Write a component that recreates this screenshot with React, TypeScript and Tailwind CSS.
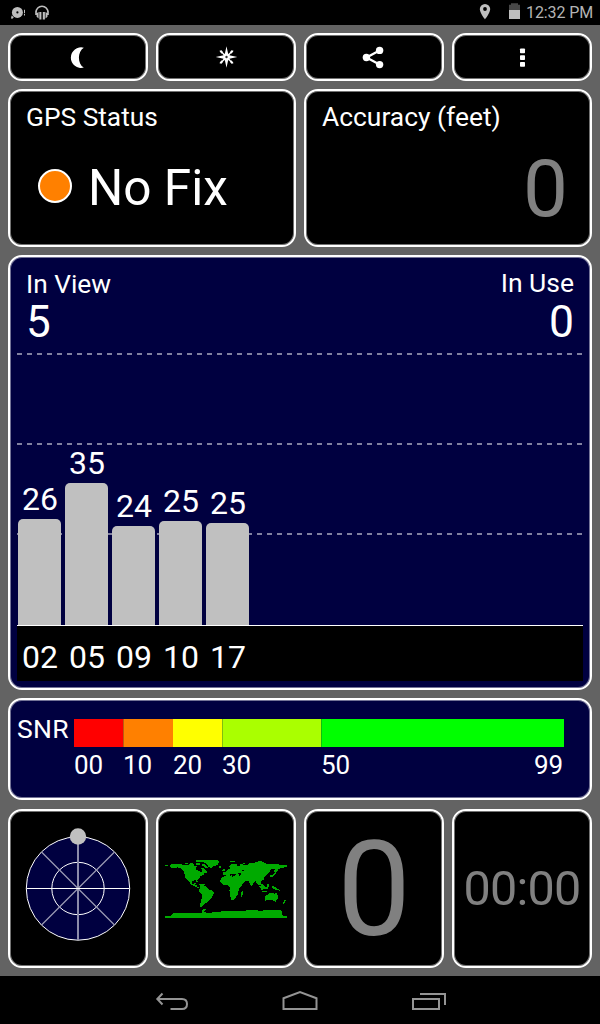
import type { ReactNode } from "react";

const bars = [
  { id: "02", snr: 26, height: 106 },
  { id: "05", snr: 35, height: 142 },
  { id: "09", snr: 24, height: 99 },
  { id: "10", snr: 25, height: 104 },
  { id: "17", snr: 25, height: 102 },
];

function Panel({ className = "", children }: { className?: string; children?: ReactNode }) {
  return (
    <div className={`rounded-[14px] border-2 border-white overflow-hidden shadow-[inset_0_0_0_1px_rgba(255,255,255,0.45)] ${className}`}>{children}</div>
  );
}

function StatusBar() {
  return (
    <header className="flex h-[25px] items-center bg-black text-[#b4b4b4]">
      <svg className="ml-[10px]" width="40" height="25" viewBox="10 0 40 25" fill="#bebebe">
        <circle cx="17.4" cy="12.4" r="5.5" />
        <circle cx="17.4" cy="12.4" r="1.1" fill="#000" />
        <path d="M11 18.4l.6-2.8 2.2 1.6-1.4 1.5z" />
        <path d="M24 9.8h1v3.4h-1zM24 14h1v1.6h-1z" />
        <path d="M36 12.3a6 6.1 0 0 1 12 0" fill="none" stroke="#bebebe" strokeWidth="1.6" />
        <path d="M35.200 11.500h1.600v3.500h-1.600zM47.200 11.500h1.600v3.500h-1.600zM36.600 13.200 38.600 12v6.500l-2-1.800zM39.300 12h2.100v7.600h-2.100zM42.800 12h2.100v7.600h-2.100zM45.500 12l2 1.200v3.500l-2 1.800z" />
      </svg>
      <div className="flex-1" />
      <svg width="50" height="25" viewBox="476 0 50 25" fill="#bebebe">
        <path fillRule="evenodd" d="M485 3.9a5.2 5.2 0 0 0-5.200 5.200c0 3.900 5.200 10.400 5.200 10.400s5.200-6.500 5.200-10.400A5.200 5.200 0 0 0 485 3.900zm0 3.200a1.900 1.900 0 1 1 0 3.800 1.900 1.900 0 0 1 0-3.800z" />
        <path fill="#484848" d="M511 3.300h7v1.400h2V10h-11V4.700h2z" />
        <path d="M509 10h11v9h-11z" />
      </svg>
      <span className="mr-[7px] w-[67px] whitespace-nowrap text-right text-[16px] leading-[25px] tracking-[-0.1px]">12:32 PM</span>
    </header>
  );
}

function MoonIcon() {
  return (
    <svg width="24" height="24" viewBox="66 45 24 24" fill="#fff">
      <path d="M83.800 47.700A10.300 10.300 0 1 0 83.800 67.600C77.300 64 77.300 51.500 83.800 47.700z" />
    </svg>
  );
}

function CompassIcon() {
  return (
    <svg width="24" height="24" viewBox="-12.500 -12 24 24" fill="#fff">
      <path d="M0-10.800 1.700-2.900 7.300-7.300 2.900-1.700 10.800 0 2.900 1.700 7.300 7.300 1.700 2.900 0 10.800-1.700 2.900-7.300 7.300-2.900 1.700-10.800 0-2.900-1.700-7.300-7.300-1.700-2.900z" />
      <path d="m5.400-6.900 1.500 1.500-2.100 2.200-1.600-1.600zM-5.400-6.900l-1.500 1.500 2.100 2.200 1.600-1.600zM5.400 6.900l1.500-1.500-2.100-2.200-1.600 1.600zM-5.400 6.900l-1.500-1.500 2.100-2.200 1.600 1.600z" />
      <circle r="1.200" fill="#333" />
    </svg>
  );
}

function ShareIcon() {
  return (
    <svg width="24" height="24" viewBox="362 45 24 24" fill="#fff">
      <path d="M379.500 50.500 366.500 57.500 379.500 64.500" fill="none" stroke="#fff" strokeWidth="2.300" />
      <circle cx="379.600" cy="50.400" r="3.700" />
      <circle cx="366.400" cy="57.500" r="3.700" />
      <circle cx="379.600" cy="64.600" r="3.700" />
    </svg>
  );
}

function MoreIcon() {
  return (
    <svg width="24" height="24" viewBox="510 45 24 24" fill="#fff">
      <rect x="520" y="48.500" width="5" height="4.800" rx=".8" />
      <rect x="520" y="55.200" width="5" height="4.800" rx=".8" />
      <rect x="520" y="62" width="5" height="4.800" rx=".8" />
    </svg>
  );
}

function GridLine() {
  return (
    <svg className="block" width="566" height="2" viewBox="0 0 566 2">
      <path d="M0 1H566" stroke="#8080a0" strokeWidth="2" strokeDasharray="5 5" />
    </svg>
  );
}

function SatelliteChart() {
  return (
    <Panel className="h-[435px] bg-[#000040]">
      <div className="flex h-[94px] justify-between px-4 pt-[9px]">
        <div>
          <div className="text-[26.300px] leading-[36px]">In View</div>
          <div className="text-[44px] leading-[41px]">5</div>
        </div>
        <div className="text-right">
          <div className="text-[26.500px] leading-[34px]">In Use</div>
          <div className="text-[44.500px] leading-[44px]">0</div>
        </div>
      </div>
      <div className="relative ml-[7px] h-[275px] w-[566px] border-b border-white pt-[2px]">
        <div className="flex flex-col gap-[88px]">
          <GridLine />
          <GridLine />
          <GridLine />
        </div>
        <div className="absolute inset-x-0 bottom-0 flex items-end gap-1 pl-px">
          {bars.map((bar) => (
            <div key={bar.id} className="w-[43px] text-center">
              <div className="mb-px pl-px text-[32px] leading-[38px]">{bar.snr}</div>
              <div className="rounded-t-[5px] bg-[#c0c0c0]" style={{ height: bar.height }} />
            </div>
          ))}
        </div>
      </div>
      <div className="ml-[7px] flex h-[55px] w-[566px] gap-1 bg-black pl-px">
        {bars.map((bar) => (
          <div key={bar.id} className="w-[43px] pl-px text-center text-[32px] leading-[62px]">{bar.id}</div>
        ))}
      </div>
    </Panel>
  );
}

function SnrLegend() {
  return (
    <Panel className="h-[102px] bg-[#000040] pl-[7px] pt-[19px]">
      <div className="flex h-[28px]">
        <div className="w-[57px] text-[26.500px] leading-[19px] tracking-[0.3px]">SNR</div>
        <div className="w-[49px] bg-[#ff0000]" />
        <div className="w-[50px] border-l border-[#b95d10] bg-[#ff8000]" />
        <div className="w-[49px] bg-[#ffff00]" />
        <div className="w-[99px] border-l border-[#80bd10] bg-[#aaff00]" />
        <div className="w-[243px] border-l border-[#10bd10] bg-[#00ff00]" />
      </div>
      <div className="flex pl-[57px] text-[26px] leading-[37px]">
        <span className="w-[49px]">00</span>
        <span className="w-[50px]">10</span>
        <span className="w-[49px]">20</span>
        <span className="w-[99px]">30</span>
        <span className="w-[243px]">50</span>
        <span className="-ml-[30px]">99</span>
      </div>
    </Panel>
  );
}

function Radar() {
  return (
    <svg width="120" height="131" viewBox="18 823 120 131" fill="none">
      <circle cx="78" cy="888.500" r="51.700" fill="#000040" stroke="#fff" />
      <circle cx="78" cy="888.500" r="26.200" stroke="#fff" />
      <path d="M78 837v103" stroke="#8c8caa" strokeWidth="2" />
      <path d="m41.500 852 73 73m0-73-73 73" stroke="#9c9cb5" strokeWidth="1.200" />
      <path d="M26.500 888.500h103" stroke="#fff" />
      <circle cx="78" cy="836.500" r="8.200" fill="#c0c0c0" />
    </svg>
  );
}

function WorldMap() {
  return (
    <svg width="122" height="58" viewBox="30 30 366 174" fill="#00aa00" shapeRendering="crispEdges">
      <path d="M30 45h9v3H30zM45 45 51 42H78L84 45H100L106 42H118V48H126L121 54 124 60 135 64 139 68 141 61 139 54H146L152 59 157 66 152 70H147V74L141 77 135 80 132 86 127 90 129 97H126L122 91 112 92 110 99 115 103 119 98H122L121 105H126V111L132 113 129 115 120 110 110 105 104 98 98 92 90 82 88 68 80 56 68 52 56 54 48 54z" />
      <path d="M88 41l6-3h6v4zM105 38h9v4h-9zM123 31h30v6h-30zM122 40h12v4h-12zM139 42h10l8 8 2 6-7-3-9-5zM146 30h42l4 3-3 12-13 4-8 6-7-4-5-9-10-6z" />
      <path d="M130 102h22l-4 3h-16zM135 106H146L155 111 160 118 171 121 177 126 176 132 169 144 162 152 152 160 148 164 142 170H139L137 165 139 150 142 136 133 124 134 112z" />
      <path d="M203 81l12-5h10l10 5h12l7 15 10 2-4 10-8 8-3 15-10 17-9 2-5-15-2-15 3-8-7-6h-14l-9-10 1-10zM258 126l6-3-2 16-5 2zM193 48h6v5h-6z" />
      <path fillRule="evenodd" d="M204 76v-9h9l2-7 15-6-6-2 6-7 15-3 3 6 12-3h18l6-6h12l15-5h10l14 7h27l18 4h15v6h-9l3 3-18 2-3 8-9 5-1-8 4-5-13 2-6 8-8 10-6 4-2 8-8 6-3 12-10-3-4-9-8 6-3 10-5-4-4-12-12-1-11 14-6-2-7-15-3-5-12-2 3-5-9-3-9 1-6-3zM224 72h20l-3 5h-11zM249 69h9v5l-4 4zM261 60h6v3h-6z" />
      <path d="M204 57h6v7h-8v-4h2zM222 48l7-6h9l-7 9-7 2zM225 33h15v3h-15zM253 42h9l7-3v3l-10 3zM309 33h9v4h-9zM346 75h6l9-9 3 3-11 11-7 1zM359 54h5v10h-5zM290 99h3v5h-3zM319 103h5l9 8h5v6l-12-1-7-6zM337 102h6v8h-6zM311 108h5l9 9v4l-5-1zM350 109h7l14 9 5 4-11-1-10-4zM320 122h17v3h-17zM331 138l11-7 9-3h6l2 4 5-5 5 11v9l-7 7-11-4h-12l-8 2zM359 154h5v3h-5zM388 151h5l-5 10h-5z" />
      <path d="M136 160h5v11h-5zM144 177h9v3l-7 5h8v3h-14v-7h4zM30 198H48L56 190H104L131 188 160 189 182 186 215 183H260L286 180H306L312 184 330 180H376L384 186 380 190V196L396 198V204H30z" />
    </svg>
  );
}

function NavigationBar() {
  return (
    <footer className="h-12 bg-black">
      <svg className="block" width="600" height="48" viewBox="0 976 600 48" fill="none" stroke="#949494" strokeWidth="2">
        <path d="M162.500 993.500 157.300 999l5.200 5.500M157.300 999H182q5 0 5 5t-5 5h-11.500" />
        <path d="M283.500 1009v-10.700l16.500-6.300 16.500 6.300V1009z" />
        <path d="M413 999h26v10h-26zM420 994h25v11" />
      </svg>
    </footer>
  );
}

export default function App() {
  return (
    <div className="flex h-[1024px] w-[600px] flex-col overflow-hidden bg-[#636363] font-[Roboto,sans-serif] text-white">
      <StatusBar />
      <main className="flex flex-1 flex-col gap-2 px-2 pt-2">
        <div className="grid h-12 grid-cols-4 gap-2">
          <Panel className="flex items-center justify-center bg-black"><MoonIcon /></Panel>
          <Panel className="flex items-center justify-center bg-black"><CompassIcon /></Panel>
          <Panel className="flex items-center justify-center bg-black"><ShareIcon /></Panel>
          <Panel className="flex items-center justify-center bg-black"><MoreIcon /></Panel>
        </div>
        <div className="grid h-[158px] grid-cols-2 gap-2">
          <Panel className="bg-black pl-[16px] pt-[8px]">
            <div className="text-[26.300px] leading-[36px]">GPS Status</div>
            <div className="flex items-center pl-[12px] pt-[20px]">
              <div className="mb-[5px] size-[34px] rounded-full border-2 border-white bg-[#ff8000]" />
              <div className="ml-[16px] text-[49.500px] leading-[66px]">No Fix</div>
            </div>
          </Panel>
          <Panel className="bg-black pl-[16px] pr-[22px] pt-[8px]">
            <div className="text-[26.400px] leading-[36px]">Accuracy (feet)</div>
            <div className="pt-[4px] text-right text-[80px] leading-[100px] text-[#808080]">0</div>
          </Panel>
        </div>
        <SatelliteChart />
        <SnrLegend />
        <div className="mt-px grid h-[159px] grid-cols-4 gap-2">
          <Panel className="flex items-center justify-center bg-black"><Radar /></Panel>
          <Panel className="flex items-center justify-center bg-black"><WorldMap /></Panel>
          <Panel className="flex items-center justify-center bg-black pt-[4px] text-[131px] leading-none text-[#808080]">0</Panel>
          <Panel className="flex items-center justify-center bg-black pt-[2px] text-[48.500px] leading-none tracking-[-0.8px] text-[#808080]">00:00</Panel>
        </div>
      </main>
      <NavigationBar />
    </div>
  );
}
